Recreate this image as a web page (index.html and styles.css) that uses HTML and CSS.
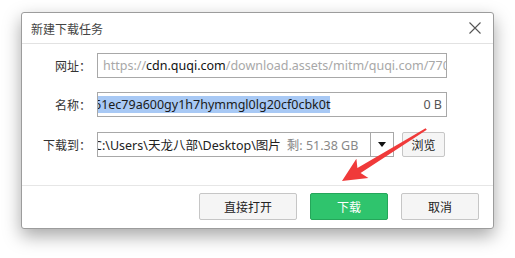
FILE: index.html
```html
<!DOCTYPE html>
<html lang="zh-CN">
<head>
  <meta charset="UTF-8" />
  <meta name="viewport" content="width=device-width, initial-scale=1.0"/>
  <title>新建下载任务</title>
  <link rel="stylesheet" href="styles.css">
</head>
<body>
  <div class="dialog">
    <div class="titlebar">
      <span class="title">新建下载任务</span>
      <svg class="close" width="12" height="12" viewBox="0 0 12 12">
        <path d="M0.5 0.5 L11.5 11.5 M11.5 0.5 L0.5 11.5" stroke="#555" stroke-width="1.1" fill="none"/>
      </svg>
    </div>

    <div class="form">
      <div class="row">
        <label class="label">网址：</label>
        <div class="field url">
          <span class="muted">https://</span><span class="host">cdn.quqi.com</span><span class="muted">/download.assets/mitm/quqi.com/7701</span>
        </div>
      </div>

      <div class="row">
        <label class="label">名称：</label>
        <div class="field name">
          <span class="scroll"><span class="selected">61ec79a600gy1h7hymmgl0lg20cf0cbk0t</span></span>
          <span class="size">0 B</span>
        </div>
      </div>

      <div class="row row-path">
        <label class="label">下载到：</label>
        <div class="field path">
          <span class="scroll">C:\Users\天龙八部\Desktop\图片<span class="free">剩: 51.38 GB</span></span>
          <span class="drop">
            <svg width="8" height="5" viewBox="0 0 8 5"><path d="M0 0 H8 L4 5 Z" fill="#111"/></svg>
          </span>
        </div>
        <button class="btn small">浏览</button>
      </div>
    </div>

    <div class="footer">
      <button class="btn wide">直接打开</button>
      <button class="btn primary">下载</button>
      <button class="btn">取消</button>
    </div>
  </div>

  <svg class="arrow" width="515" height="258" viewBox="0 0 515 258">
    <polygon points="426.8,129.8 360.6,173.1 368.4,178 342,181 356.4,158.8 357.4,168 425.6,128.2" fill="#f03a3a"/>
  </svg>
</body>
</html>
```

FILE: styles.css
```css
body {
  margin: 0;
  width: 515px;
  height: 258px;
  background-color: #ffffff;
  font-family: "Noto Sans", "Noto Sans CJK SC", sans-serif;
  font-size: 12px;
  color: #333;
  position: relative;
  overflow: hidden;
}
.dialog {
  margin: 12px 0 0 21px;
  width: 473px;
  height: 217px;
  box-sizing: border-box;
  border: 1px solid #9c9c9c;
  border-radius: 3px;
  background-color: #fff;
  box-shadow: 0 7px 18px rgba(0, 0, 0, 0.35);
  display: flex;
  flex-direction: column;
}
.titlebar {
  height: 30px;
  border-bottom: 1px solid #e2e2e2;
  display: flex;
  align-items: center;
  justify-content: space-between;
  padding: 0 12px 0 9px;
  flex-shrink: 0;
}
.title {
  font-family: "Noto Sans CJK SC", sans-serif;
  color: #444;
}
.form {
  flex: 1;
  padding-top: 9px;
  display: flex;
  flex-direction: column;
  gap: 14px;
}
.row {
  display: flex;
  align-items: center;
  height: 25px;
}
.row-path {
  margin-top: 1px;
}
.label {
  width: 69px;
  text-align: right;
  padding-right: 6px;
  font-family: "Noto Sans CJK SC", sans-serif;
  color: #333;
}
.field {
  width: 350px;
  height: 25px;
  box-sizing: border-box;
  border: 1px solid #a8a8a8;
  display: flex;
  align-items: center;
  overflow: hidden;
  white-space: nowrap;
  color: #222;
  font-size: 12.5px;
}
.url {
  padding-left: 5px;
}
.muted {
  color: #a8a8a8;
}
.host {
  color: #111;
}
.name {
  padding-right: 4px;
}
.scroll {
  flex: 1;
  overflow: hidden;
  white-space: nowrap;
  text-indent: -4px;
}
.selected {
  background-color: #a8c9f5;
  color: #1a1a1a;
}
.size {
  color: #555;
}
.path {
  width: 297px;
}
.free {
  color: #888;
  margin-left: 6px;
}
.drop {
  width: 22px;
  height: 23px;
  border-left: 1px solid #a8a8a8;
  display: flex;
  align-items: center;
  justify-content: center;
}
.btn {
  font-family: "Noto Sans CJK SC", sans-serif;
  font-size: 12px;
  color: #222;
  background-color: #f5f5f5;
  border: 1px solid #c6c6c6;
  border-radius: 2px;
  height: 27px;
  width: 78px;
  padding: 0;
}
.btn.small {
  width: 43px;
  height: 25px;
  margin-left: 8px;
}
.btn.wide {
  width: 98px;
}
.btn.primary {
  background-color: #2fc46d;
  border-color: #25a65a;
  color: #fff;
}
.footer {
  height: 43px;
  border-top: 1px solid #e6e6e6;
  display: flex;
  justify-content: flex-end;
  align-items: flex-start;
  gap: 13px;
  padding: 7px 14px 0 0;
  box-sizing: border-box;
  flex-shrink: 0;
}
.arrow {
  position: absolute;
  left: 0;
  top: 0;
  pointer-events: none;
}
```
